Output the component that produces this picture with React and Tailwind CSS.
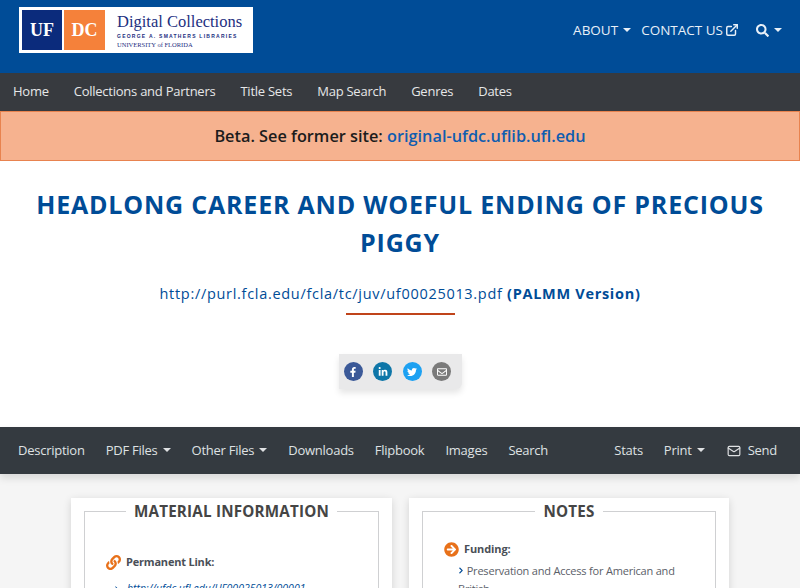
import { ExternalLink, Mail } from "lucide-react";
import { FaSearch, FaLink, FaArrowCircleRight, FaChevronRight, FaFacebookF, FaLinkedinIn, FaTwitter, FaRegEnvelope } from "react-icons/fa";

const font = "font-['Open_Sans','Noto_Sans',sans-serif]";

function Caret() {
  return <span className="ml-[5px] inline-block w-0 h-0 border-x-[4px] border-x-transparent border-t-[4px] border-t-current align-[3px]" />;
}

function Logo() {
  return (
    <div className="flex items-center w-[234px] h-[46px] bg-white p-[3px] ml-[19px]">
      <div className="w-[40px] h-[40px] bg-[#0b2b7c] text-white flex items-center justify-center font-['Liberation_Serif',serif] font-bold text-[18px]">UF</div>
      <div className="ml-[2px] w-[41px] h-[40px] bg-[#f5813a] text-white flex items-center justify-center font-['Liberation_Serif',serif] font-bold text-[18px]">DC</div>
      <div className="ml-[12px] flex flex-col">
        <div className="font-['Liberation_Serif',serif] text-[#1d2f7f] text-[16.5px] leading-[19px] whitespace-nowrap">Digital Collections</div>
        <div className="font-['Liberation_Sans',sans-serif] font-bold text-[#1d2f7f] text-[5px] leading-[8px] tracking-[1.25px] mt-[1px] whitespace-nowrap">GEORGE A. SMATHERS LIBRARIES</div>
        <div className="font-['Liberation_Serif',serif] text-[#1d2f7f] text-[6.5px] leading-[9px] whitespace-nowrap">UNIVERSITY of FLORIDA</div>
      </div>
    </div>
  );
}

function Header() {
  return (
    <div className="h-[73px] bg-[#004c97] flex items-start justify-between pt-[7px]">
      <Logo />
      <div className="flex items-center text-[#e8f0f8] text-[13.5px] pt-[13px] pr-[18px]">
        <span>ABOUT<Caret /></span>
        <span className="ml-[10px] flex items-center">CONTACT US<ExternalLink className="ml-[2px] w-[14px] h-[14px]" strokeWidth={2.5} /></span>
        <span className="ml-[17px] flex items-center"><FaSearch className="w-[13px] h-[13px]" /><Caret /></span>
      </div>
    </div>
  );
}

function MainNav() {
  const items = ["Home", "Collections and Partners", "Title Sets", "Map Search", "Genres", "Dates"];
  return (
    <div className="h-[38px] bg-[#373a3f] flex items-center pl-[13px] gap-[25px] text-[#e6e7e8] text-[13px] tracking-[-0.25px]">
      {items.map((i) => <span key={i}>{i}</span>)}
    </div>
  );
}

function ShareButton({ color, children }) {
  return <span className={`w-[19px] h-[19px] rounded-full flex items-center justify-center text-white text-[10px] ${color}`}>{children}</span>;
}

function Hero() {
  return (
    <div className="h-[266px] bg-white flex flex-col items-center">
      <h1 className="mt-[24px] text-center text-[#004c97] font-bold text-[25px] leading-[38px] tracking-[0.8px] px-[30px]">
        HEADLONG CAREER AND WOEFUL ENDING OF PRECIOUS PIGGY
      </h1>
      <p className="mt-[23px] text-[#004c97] text-[14.5px] leading-[20px] tracking-[0.7px]">
        http://purl.fcla.edu/fcla/tc/juv/uf00025013.pdf <b>(PALMM Version)</b>
      </p>
      <div className="mt-[9px] w-[109px] h-[2px] bg-[#c0441a]" />
      <div className="mt-[39px] w-[123px] h-[35px] bg-[#e9e9ea] rounded-br-md shadow-[0_4px_6px_rgba(0,0,0,0.1)] flex items-center pl-[5px] gap-[10.5px]">
        <ShareButton color="bg-[#3b5998]"><FaFacebookF /></ShareButton>
        <ShareButton color="bg-[#0e76a8]"><FaLinkedinIn /></ShareButton>
        <ShareButton color="bg-[#1da1f2]"><FaTwitter /></ShareButton>
        <ShareButton color="bg-[#7a7a7a]"><FaRegEnvelope /></ShareButton>
      </div>
    </div>
  );
}

function SubNav() {
  return (
    <div className="h-[47px] bg-[#343a40] flex items-center justify-between pl-[18px] pr-[23px] text-[#dfe1e3] text-[13px] tracking-[-0.25px] shadow-[0_4px_8px_rgba(0,0,0,0.12)] relative">
      <div className="flex items-center gap-[21px]">
        <span>Description</span>
        <span>PDF Files<Caret /></span>
        <span>Other Files<Caret /></span>
        <span>Downloads</span>
        <span>Flipbook</span>
        <span>Images</span>
        <span>Search</span>
      </div>
      <div className="flex items-center">
        <span>Stats</span>
        <span className="ml-[21px]">Print<Caret /></span>
        <span className="ml-[22px] flex items-center"><Mail className="w-[14px] h-[14px] mr-[7px]" strokeWidth={2} />Send</span>
      </div>
    </div>
  );
}

function Card({ title, width, children }) {
  return (
    <div className={`${width} h-[200px] shrink-0 bg-white shadow-[0_2px_8px_rgba(0,0,0,0.14)] px-[13px] pt-[13px]`}>
      <div className="h-[300px] border border-[#cfd0d2] relative px-[21px]">
        <div className="absolute -top-[12px] left-0 right-0 flex justify-center">
          <span className="bg-white px-[8px] text-[#454545] font-bold text-[15.2px] leading-[22px] tracking-[0.2px]">{title}</span>
        </div>
        {children}
      </div>
    </div>
  );
}

export default function App() {
  return (
    <div className={`h-screen overflow-hidden bg-[#f5f5f5] ${font}`}>
      <Header />
      <MainNav />
      <div className="h-[50px] bg-[#f6b28f] border border-[#e8834f] flex items-center justify-center text-[16.3px] font-semibold text-[#1c1c1c]">
        <span>Beta. See former site: <span className="text-[#0f5db0]">original-ufdc.uflib.ufl.edu</span></span>
      </div>
      <Hero />
      <SubNav />
      <div className="flex gap-[17px] pl-[71px] pt-[24px]">
        <Card title="MATERIAL INFORMATION" width="w-[321px]">
          <div className="mt-[42px] flex items-center text-[#4a4f57] font-bold text-[11px] tracking-[-0.2px]">
            <FaLink className="text-[#e8711a] w-[15px] h-[15px] mr-[5px]" />Permanent Link:
          </div>
          <div className="mt-[8px] pl-[8px] text-[#004c97] text-[10.5px] leading-[18px] italic">
            <FaChevronRight className="inline text-[#004c97] w-[5px] h-[5px] mr-[8px]" />
            http://ufdc.ufl.edu/UF00025013/00001
          </div>
        </Card>
        <Card title="NOTES" width="w-[320px]">
          <div className="mt-[29px] flex items-center text-[#4a4f57] font-bold text-[11px] tracking-[-0.1px]">
            <FaArrowCircleRight className="text-[#e8711a] w-[15px] h-[15px] mr-[5px]" />Funding:
          </div>
          <p className="mt-[4px] pl-[14px] text-[#5b6068] text-[11px] tracking-[-0.2px] leading-[18px]">
            <FaChevronRight className="inline text-[#004c97] w-[6px] h-[7px] align-[1px]" />
            {" "}Preservation and Access for American and British
          </p>
        </Card>
      </div>
    </div>
  );
}
